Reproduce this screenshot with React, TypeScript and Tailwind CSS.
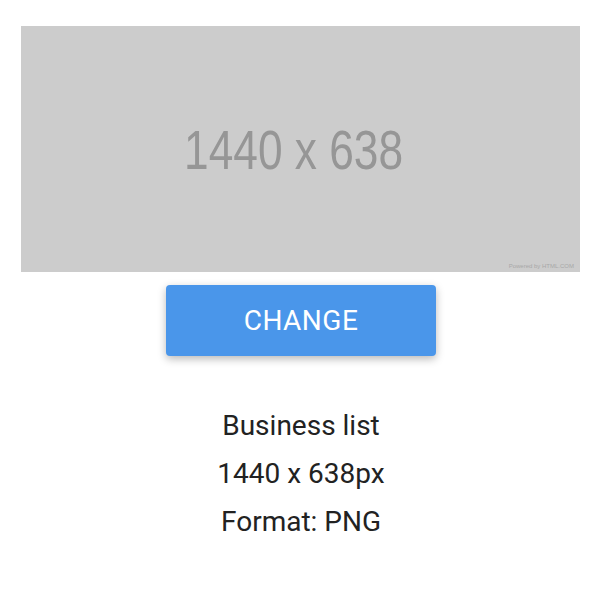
export default function App() {
  return (
    <div className="min-h-[590px] w-[608px] bg-white" style={{ fontFamily: "Roboto, 'Liberation Sans', sans-serif" }}>
      <div className="pt-[26px] pl-[21px]">
        <div className="relative flex h-[246px] w-[559px] items-center justify-center bg-[#cccccc]">
          <span
            className="ml-[-14px] mt-[2px] inline-block scale-x-[0.79] text-[56px] leading-none text-[#969696]"
            style={{ fontFamily: "'Liberation Sans', Arial, sans-serif" }}
          >
            1440 x 638
          </span>
          <span
            className="absolute right-[6px] bottom-[3px] text-[6px] leading-none text-[#a8a8a8]"
            style={{ fontFamily: "'Liberation Sans', Arial, sans-serif" }}
          >
            Powered by HTML.COM
          </span>
        </div>
      </div>
      <div className="mt-[13px] flex justify-center">
        <button className="ml-[-6px] h-[71px] w-[270px] rounded-[4px] bg-[#4a96ea] text-[28px] font-normal tracking-[0.5px] text-white shadow-[0_3px_8px_rgba(0,0,0,0.28)]">
          CHANGE
        </button>
      </div>
      <div className="mt-[46px] flex flex-col items-center text-[28px] leading-[48px] text-[#222222]">
        <div className="ml-[-6px]">Business list</div>
        <div className="ml-[-6px]">1440 x 638px</div>
        <div className="ml-[-6px]">Format: PNG</div>
      </div>
    </div>
  );
}
